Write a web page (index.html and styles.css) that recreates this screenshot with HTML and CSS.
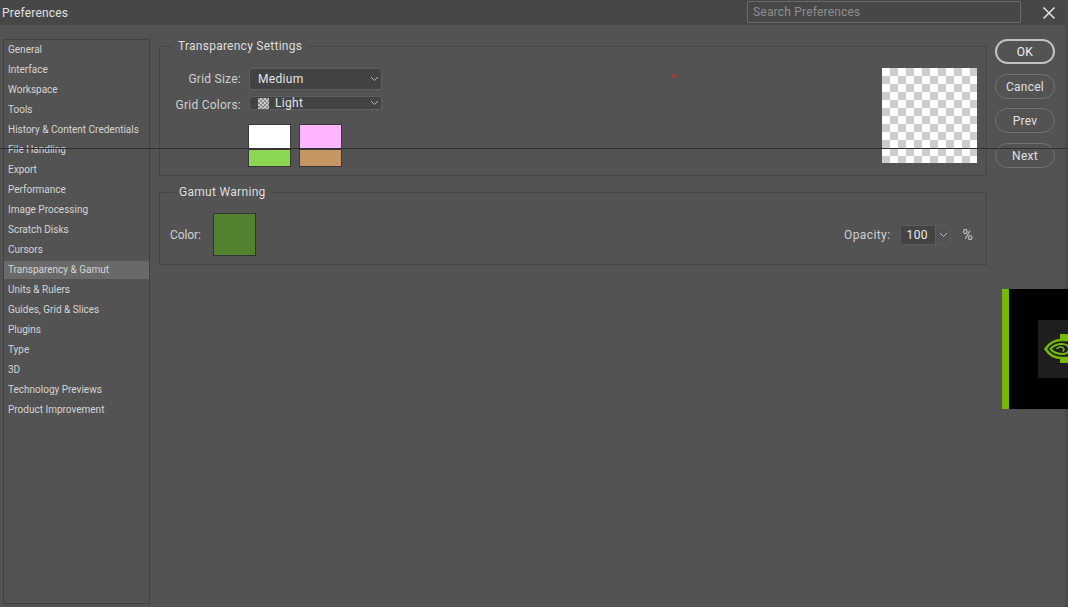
FILE: index.html
```html
<!DOCTYPE html>
<html lang="en">
<head>
<meta charset="utf-8">
<title>Preferences</title>
<link rel="stylesheet" href="styles.css">
</head>
<body>
<div class="dialog">
  <header class="titlebar">
    <span class="title">Preferences</span>
    <div class="search">Search Preferences</div>
    <svg class="close" width="14" height="14" viewBox="0 0 14 14"><path d="M1.500 1.500L12.500 12.500M12.500 1.500L1.500 12.500" stroke="#e2e2e2" stroke-width="1.500" fill="none"/></svg>
  </header>
  <div class="content">
    <nav class="sidebar">
      <div class="item">General</div>
      <div class="item">Interface</div>
      <div class="item">Workspace</div>
      <div class="item">Tools</div>
      <div class="item">History &amp; Content Credentials</div>
      <div class="item">File Handling</div>
      <div class="item">Export</div>
      <div class="item">Performance</div>
      <div class="item">Image Processing</div>
      <div class="item">Scratch Disks</div>
      <div class="item">Cursors</div>
      <div class="item selected">Transparency &amp; Gamut</div>
      <div class="item">Units &amp; Rulers</div>
      <div class="item">Guides, Grid &amp; Slices</div>
      <div class="item">Plugins</div>
      <div class="item">Type</div>
      <div class="item">3D</div>
      <div class="item">Technology Previews</div>
      <div class="item">Product Improvement</div>
    </nav>
    <main class="main">
      <fieldset class="group group-transparency">
        <legend class="legend">Transparency Settings</legend>
        <div class="settings">
          <div class="form">
            <label class="label form-label">Grid Size:</label>
            <div class="select"><span>Medium</span><svg class="chev" width="9" height="6" viewBox="0 0 9 6"><path d="M1 1l3.500 3.500L8 1" stroke="#b4b4b4" fill="none"/></svg></div>
            <label class="label form-label label-colors">Grid Colors:</label>
            <div class="select">
              <span class="light"><i class="mini-checker"></i>Light</span>
              <svg class="chev" width="9" height="6" viewBox="0 0 9 6"><path d="M1 1l3.500 3.500L8 1" stroke="#b4b4b4" fill="none"/></svg>
            </div>
            <div class="swatches">
              <div class="swatch white"></div>
              <div class="swatch pink"></div>
              <div class="swatch green"></div>
              <div class="swatch tan"></div>
            </div>
          </div>
          <div class="preview"></div>
        </div>
      </fieldset>
      <fieldset class="group group-gamut">
        <legend class="legend legend-gamut">Gamut Warning</legend>
        <div class="gamut">
          <span class="label color-label">Color:</span>
          <div class="gamut-color"></div>
          <span class="label opacity">Opacity:</span>
          <div class="number"><span class="num-value">100</span><span class="num-arrow"><svg width="9" height="6" viewBox="0 0 9 6"><path d="M1 1l3.500 3.500L8 1" stroke="#b4b4b4" fill="none"/></svg></span></div>
          <span class="label pct">%</span>
        </div>
      </fieldset>
    </main>
    <div class="buttons">
      <button class="btn primary">OK</button>
      <button class="btn">Cancel</button>
      <button class="btn">Prev</button>
      <button class="btn">Next</button>
    </div>
  </div>
</div>
<div class="scanline"></div>
<div class="reddot"></div>
<div class="nvidia">
  <div class="nv-box">
    <svg width="30" height="58" viewBox="0 0 30 58">
      <path d="M22 14h8v29h-8z" fill="#76b900"/>
      <path d="M7.500 29C11 23.500 17 20 24 20H32V38H24C17 38 11 34.500 7.500 29Z" fill="#1e1e1e" stroke="#76b900" stroke-width="2.500"/>
      <path d="M12.500 29C15 26 19 24 24 24C28 24 31 26 31 29C31 32 28 34 24 34C19 34 15 32 12.500 29Z" fill="#1e1e1e" stroke="#76b900" stroke-width="2"/>
      <path d="M18.500 29C20 27.500 22 26.800 24 27.300C26.500 28 26.500 30.500 24.500 31.300" fill="none" stroke="#76b900" stroke-width="1.500"/>
    </svg>
  </div>
</div>
</body>
</html>
```
FILE: styles.css
```css
* { box-sizing: border-box; }
html, body { margin: 0; height: 100%; }
body {
  width: 1068px;
  height: 607px;
  overflow: hidden;
  background: #4a4a4a;
  font-family: "Roboto", "Noto Sans", sans-serif;
  color: #d8d8d8;
  position: relative;
}
.dialog {
  width: 1065px;
  height: 607px;
  background: #535353;
  border-top-right-radius: 8px;
  display: flex;
  flex-direction: column;
  overflow: hidden;
}
.titlebar {
  height: 25px;
  flex: none;
  background: #474747;
  display: flex;
  align-items: center;
  padding-left: 2px;
}
.title { font-size: 12px; color: #e0e0e0; letter-spacing: 0.2px; }
.search {
  margin-left: auto;
  width: 274px;
  height: 22px;
  margin-top: -2px;
  border: 1px solid #696969;
  padding-left: 5px;
  font-size: 12px;
  line-height: 20px;
  color: #8f8f8f;
  letter-spacing: 0.2px;
}
.close { margin-left: 21px; margin-right: 9px; }
.content {
  flex: 1;
  display: flex;
  padding: 14px 10px 3px 3px;
  min-height: 0;
}
.sidebar {
  width: 147px;
  flex: none;
  border: 1px solid #414141;
}
.item {
  height: 20px;
  line-height: 19px;
  padding-left: 4px;
  font-size: 10px;
  color: #d4d4d4;
  white-space: nowrap;
}
.selected {
  background: #696969;
  background-clip: padding-box;
  border-top: 1px solid transparent;
  border-bottom: 1px solid transparent;
  line-height: 17px;
}
.main {
  width: 828px;
  flex: none;
  margin-left: 9px;
  display: flex;
  flex-direction: column;
}
.group {
  margin: 0;
  min-width: 0;
  border: 1px solid #464646;
  padding: 0 9px 0 0;
}
.legend {
  margin-left: 13px;
  padding: 0 5px;
  height: 14px;
  line-height: 15px;
  font-size: 12px;
  color: #dedede;
  letter-spacing: 0.25px;
}
.legend-gamut { margin-left: 14px; letter-spacing: 0.3px; }
.group-gamut { margin-top: 9px; }
.settings {
  display: flex;
  justify-content: space-between;
  padding: 15px 0 9px;
}
.form {
  display: grid;
  grid-template-columns: 82px 133px;
  grid-template-rows: 22px 14px 50px;
  column-gap: 7px;
  row-gap: 6px;
  align-items: center;
  align-content: start;
}
.label { font-size: 12px; color: #cfcfcf; white-space: nowrap; letter-spacing: 0.25px; }
.form-label { text-align: right; margin-right: 1px; }
.select {
  background: #434343;
  border: 1px solid #5e5e5e;
  border-radius: 3px;
  display: flex;
  align-items: center;
  justify-content: space-between;
  height: 100%;
  padding: 0 2px 0 8px;
  font-size: 12px;
  color: #e4e4e4;
  letter-spacing: 0.3px;
}
.label-colors { margin-top: 4px; }
.light { display: flex; align-items: center; gap: 6px; }
.mini-checker {
  width: 11px;
  height: 11px;
  background: repeating-conic-gradient(#c8c8c8 0 25%, #8a8a8a 0 50%) 0 0 / 4px 4px;
}
.swatches {
  grid-column: 2;
  margin: 8px 0 0 -1px;
  display: grid;
  grid-template-columns: 43px 43px;
  grid-template-rows: 25px 18px;
  column-gap: 8px;
  align-self: start;
}
.swatch { border: 1px solid #383838; }
.white { background: #fff; }
.pink { background: #ffb5ff; }
.green { background: #8bd751; }
.tan { background: #c69564; }
.preview {
  width: 95px;
  height: 95px;
  background: repeating-conic-gradient(#cdcdcd 0 25%, #fff 0 50%) 0 0 / 16px 16px;
}
.gamut {
  display: flex;
  align-items: center;
  padding: 14px 0 8px 10px;
}
.color-label { width: 43px; flex: none; letter-spacing: -0.1px; }
.gamut-color {
  width: 43px;
  height: 43px;
  background: #528130;
  border: 1px solid #333;
}
.opacity { margin-left: auto; letter-spacing: 0.4px; }
.number {
  width: 51px;
  height: 20px;
  margin-left: 10px;
  display: flex;
  background: #434343;
  border: 1px solid #5a5a5a;
  border-radius: 3px;
  font-size: 12px;
  color: #ececec;
}
.num-value { flex: 1; padding-left: 5px; line-height: 18px; letter-spacing: 0.4px; }
.num-arrow {
  width: 15px;
  background: #535353;
  border-left: 1px solid #5e5e5e;
  display: flex;
  align-items: center;
  justify-content: center;
}
.pct { margin-left: 11px; margin-right: 4px; font-size: 14px; }
.buttons {
  width: 60px;
  flex: none;
  margin-left: 8px;
  display: flex;
  flex-direction: column;
  gap: 9.500px;
}
.btn {
  height: 25px;
  border-radius: 13px;
  background: transparent;
  border: 1px solid #727272;
  color: #e0e0e0;
  font-family: inherit;
  font-size: 12px;
  letter-spacing: 0.25px;
  padding: 1px 0 0;
}
.primary { border: 2px solid #c2c2c2; color: #f0f0f0; }
.scanline {
  position: absolute;
  left: 0;
  top: 148px;
  width: 1068px;
  height: 1px;
  background: #2f2f2f;
}
.reddot {
  position: absolute;
  left: 672px;
  top: 74px;
  width: 4px;
  height: 4px;
  border-radius: 50%;
  background: #b33;
}
.nvidia {
  position: absolute;
  left: 1002px;
  top: 289px;
  width: 66px;
  height: 120px;
  background: #000;
  border-left: 7px solid #76b900;
  overflow: hidden;
}
.nv-box {
  position: absolute;
  left: 29px;
  top: 31px;
  width: 30px;
  height: 58px;
  background: #1e1e1e;
}
```
